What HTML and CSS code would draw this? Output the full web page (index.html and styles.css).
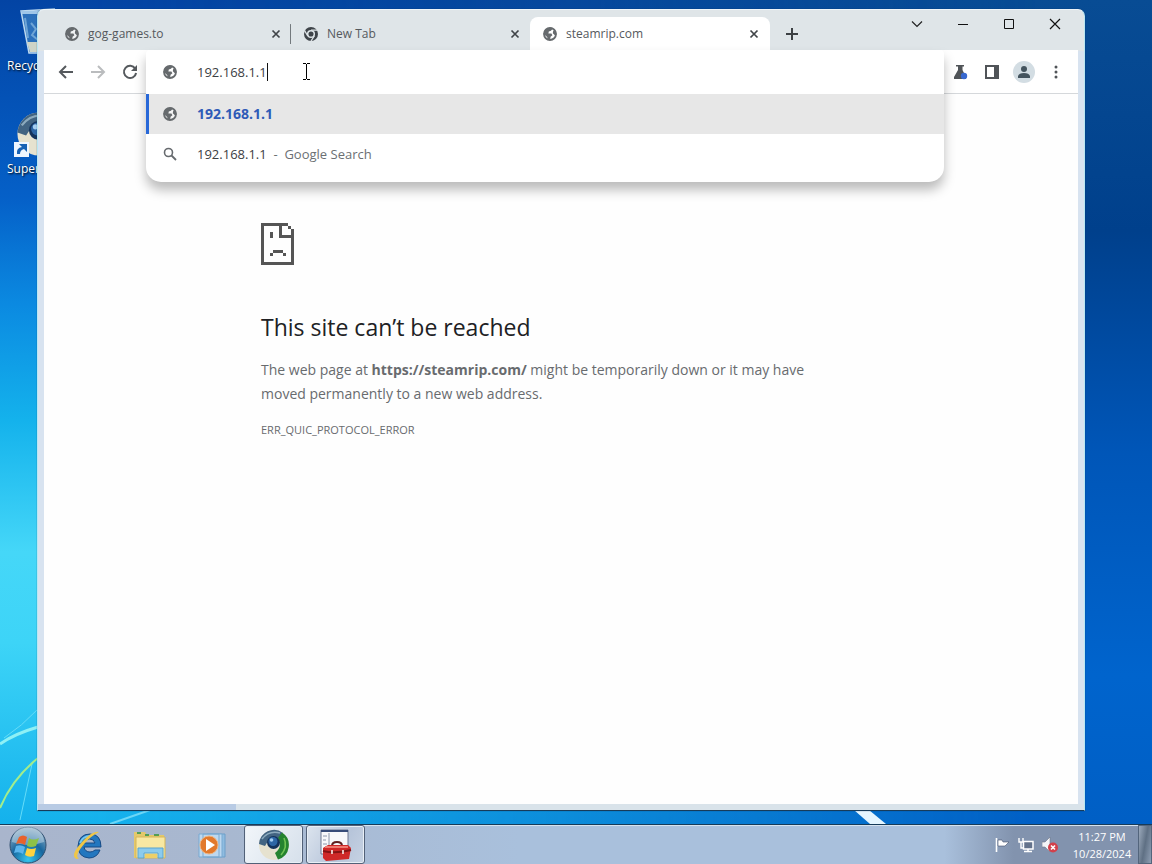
FILE: index.html
```html
<!DOCTYPE html>
<html lang="en">
<head>
<meta charset="utf-8">
<title>steamrip.com</title>
<link rel="stylesheet" href="styles.css">
</head>
<body>
<svg class="defs" aria-hidden="true">
  <defs>
    <symbol id="globe" viewBox="0 0 16 16">
      <circle cx="8" cy="8" r="6" fill="#fff" fill-opacity=".55" stroke="currentColor" stroke-width="1.8"/>
      <path fill="currentColor" d="M1.5 8 3 4 6 2 9.6 1.6 10.4 3 9 4.8 6.8 5.6 6.4 7.4 9.4 7.6 10.4 9.2 8.6 10.8 8 14.2 5.6 13.6 5.2 11ZM11.2 4.8 14 5.4 14.5 8.6 12.8 9.2 10.8 7.2Z"/>
    </symbol>
    <symbol id="close" viewBox="0 0 10 10"><path d="M1.5 1.5l7 7M8.5 1.5l-7 7" stroke="currentColor" stroke-width="1.7"/></symbol>
    <symbol id="ball" viewBox="0 0 32 32">
      <circle cx="16" cy="16" r="15" fill="#e6e2cf"/>
      <path d="M1 15A15 15 0 0 1 25 4L20 10Q10 10 7 17Z" fill="#426482"/>
      <path d="M24 3.500A15 15 0 0 1 20 30.500L17 24Q25 18 20 9Z" fill="#24832f"/>
      <path d="M26 9Q30 18 23 26" fill="none" stroke="#6fc354" stroke-width="1.6"/>
      <path d="M4 10Q11 1 22 4" fill="none" stroke="#8caabd" stroke-width="1.6"/>
      <circle cx="15.500" cy="13.500" r="6.500" fill="#14335c"/><circle cx="15" cy="12.500" r="4.500" fill="#2d66a5"/><circle cx="13.500" cy="11" r="1.800" fill="#a4cdf0"/>
    </symbol>
  </defs>
</svg>
<main class="desktop">
  <svg class="streaks left" viewBox="0 0 240 190" aria-hidden="true">
    <path d="M0 110Q14 100 38 93" stroke="#8ef0f5" stroke-width="3" fill="none"/>
    <path d="M4 104Q22 92 38 75M20 186 32 130" stroke="#65dcf8" fill="none"/>
    <path d="M0 174Q12 145 38 124" stroke="#a2ed8c" stroke-width="2" fill="none"/>
    <path d="M110 190 150 176" stroke="#6cd6f6" stroke-width="2"/>
  </svg>
  <svg class="streaks middle" viewBox="0 0 36 14" aria-hidden="true"><path d="M2 0H17L34 14H18Z" fill="#e5f6ff"/></svg>

  <ul class="shortcuts">
    <li>
      <svg width="36" height="48" viewBox="0 0 36 48" aria-hidden="true"><path d="M2 3 36 1 31 45H10Z" fill="#3b7fc2" fill-opacity=".75" stroke="#bbd8ef" stroke-width="1.500"/><path d="M2 3H36V6H3Z" fill="#9fc6e8"/><path d="M8 34H33L31 44H11Z" fill="#ced4c7"/><path d="M6 10 9 30M12 15l5 6-4 6 6 5" stroke="#6fa5d6" stroke-width="2" fill="none"/></svg>
      <span>Recycle Bin</span>
    </li>
    <li>
      <svg width="48" height="48" viewBox="0 0 48 48" aria-hidden="true"><use href="#ball" x="2" y="0" width="46" height="46"/><path d="M0 31H15V46H0Z" fill="#eef6ff"/><path d="M3 43Q2 37 8 36L5 33H13V41L10 38Q6 39 6 43Z" fill="#1762b5"/></svg>
      <span>Supermium</span>
    </li>
  </ul>

  <section class="window" aria-label="Browser">
    <header class="titlebar">
      <div class="tabs" role="tablist">
        <div class="tab" role="tab"><svg class="icon"><use href="#globe"/></svg><span>gog-games.to</span><button aria-label="Close gog-games.to"><svg><use href="#close"/></svg></button></div>
        <div class="tab" role="tab">
          <svg class="icon" viewBox="0 0 16 16"><circle cx="8" cy="8" r="7" fill="#3f4449"/><circle cx="8" cy="8" r="3.3" fill="#3f4449" stroke="#dfe5e8" stroke-width="1.5"/><path d="M8 4.2H14.5M4.8 10 1.6 4.6M11.3 10 8 15" stroke="#dfe5e8" stroke-width="1.3"/></svg>
          <span>New Tab</span><button aria-label="Close New Tab"><svg><use href="#close"/></svg></button></div>
        <div class="tab active" role="tab" aria-selected="true"><svg class="icon"><use href="#globe"/></svg><span>steamrip.com</span><button aria-label="Close steamrip.com"><svg><use href="#close"/></svg></button></div>
        <button class="new-tab" aria-label="New tab"><svg width="12" height="12" viewBox="0 0 12 12"><path d="M6 0V12M0 6H12" stroke="#3c4043" stroke-width="2"/></svg></button>
      </div>
      <div class="controls">
        <button aria-label="Search tabs"><svg viewBox="0 0 12 12"><path d="M1 3.5 6 8.5 11 3.5" fill="none" stroke="#222" stroke-width="1.2"/></svg></button>
        <button aria-label="Minimize"><svg viewBox="0 0 12 12"><path d="M1 6.5H11" stroke="#111"/></svg></button>
        <button aria-label="Maximize"><svg viewBox="0 0 12 12"><path d="M1.5 1.5H10.5V10.5H1.5Z" fill="none" stroke="#111"/></svg></button>
        <button aria-label="Close"><svg viewBox="0 0 12 12"><path d="M1 1 11 11M11 1 1 11" stroke="#111" stroke-width="1.2"/></svg></button>
      </div>
    </header>

    <div class="toolbar">
      <button aria-label="Back"><svg viewBox="0 0 16 16"><path d="M15 8H2.5M8 2 2 8 8 14" fill="none" stroke="#55595d" stroke-width="2"/></svg></button>
      <button aria-label="Forward"><svg viewBox="0 0 16 16"><path d="M1 8H13.5M8 2 14 8 8 14" fill="none" stroke="#babcbe" stroke-width="2"/></svg></button>
      <button aria-label="Reload"><svg viewBox="0 0 16 16"><path d="M13.2 4.6A6.1 6.1 0 1 0 14.1 9" fill="none" stroke="#55595d" stroke-width="2"/><path d="M15 1V7H9Z" fill="#55595d"/></svg></button>
      <div class="omnibox">
        <div class="popup">
          <label class="address"><svg class="icon"><use href="#globe"/></svg><input type="text" value="192.168.1.1" aria-label="Address" spellcheck="false"><i class="caret"></i></label>
          <ul class="suggestions">
            <li class="selected"><svg class="icon"><use href="#globe"/></svg><b>192.168.1.1</b></li>
            <li><svg class="icon" viewBox="0 0 16 16"><circle cx="6.5" cy="6.5" r="4" fill="none" stroke="#666a6e" stroke-width="1.6"/><path d="M9.5 9.5 14 14" stroke="#666a6e" stroke-width="1.8"/></svg><span>192.168.1.1&nbsp; <em>- &nbsp;Google Search</em></span></li>
          </ul>
        </div>
      </div>
      <button aria-label="Experiments"><svg viewBox="0 0 16 16"><path d="M4 1H12V2.5H10.5V6L14 13V15H2V13L6 6V2.5H4Z" fill="#505458"/><circle cx="12" cy="12" r="3.2" fill="#3868cf"/></svg></button>
      <button aria-label="Side panel"><svg viewBox="0 0 16 16"><path d="M1 1H15V15H1Z" fill="#505458"/><path d="M3 3H10V13H3Z" fill="#fff"/></svg></button>
      <button class="profile" aria-label="Profile"><svg viewBox="0 0 22 22"><circle cx="11" cy="11" r="11" fill="#d3dde3"/><circle cx="11" cy="8" r="3" fill="#44545e"/><path d="M5 17V15Q6 12 11 12T17 15V17Z" fill="#44545e"/></svg></button>
      <button aria-label="Menu"><svg viewBox="0 0 16 16" fill="#505458"><circle cx="8" cy="3" r="1.5"/><circle cx="8" cy="8" r="1.5"/><circle cx="8" cy="13" r="1.5"/></svg></button>
    </div>

    <article class="page">
      <div class="error">
        <svg class="sad" width="34" height="43" viewBox="0 0 34 43" fill="#555" shape-rendering="crispEdges" aria-hidden="true"><path d="M0 0H27V3H21V12H33V42H0ZM3 3V39H30V15H18V3ZM27 3H30V6H27ZM30 6H33V12H30ZM9 9H12V15H9ZM12 27H22V30H12ZM9 30H12V33H9ZM22 30H25V33H22Z" fill-rule="evenodd"/></svg>
        <h1>This site can’t be reached</h1>
        <p>The web page at <strong>https://steamrip.com/</strong> might be temporarily down or it may have moved permanently to a new web address.</p>
        <p class="code">ERR_QUIC_PROTOCOL_ERROR</p>
      </div>
    </article>
  </section>
  <svg class="pointer" viewBox="0 0 9 17" aria-hidden="true"><path d="M1 .5H4M5 .5H8M1 16.5H4M5 16.5H8M4.5 1V16" stroke="#000"/></svg>
</main>

<footer class="taskbar">
  <button class="start" aria-label="Start">
    <svg width="38" height="38" viewBox="0 0 38 38"><defs><radialGradient id="orb" cx=".5" cy=".9" r=".9"><stop offset="0" stop-color="#35c6ee"/><stop offset=".5" stop-color="#17669e"/><stop offset="1" stop-color="#9db6c9"/></radialGradient></defs><circle cx="19" cy="19" r="18" fill="url(#orb)" stroke="#304f70"/><path d="M3 16A16 16 0 0 1 35 16Q19 22 3 16" fill="#d5e4ef" fill-opacity=".45"/><path d="M10 11Q14 8 18 11L16 19Q12 16 7 18Z" fill="#e8622c"/><path d="M20 12Q24 15 30 12L27 20Q22 22 18 20Z" fill="#8cc248"/><path d="M7 20Q12 18 16 21L14 28Q10 25 5 27Z" fill="#5bb5ed"/><path d="M18 22Q22 24 27 22L25 30Q20 32 16 29Z" fill="#ffd33e"/></svg>
  </button>
  <button class="task" aria-label="Internet Explorer">
    <svg width="32" height="32" viewBox="0 0 32 32"><path d="M29 18H12Q13 23 18 23 21 23 23 21H28Q25 29 17 29 6 28 6 17 7 5 18 5 29 5 29 18ZM12 14H23Q22 10 17.5 10T12 14Z" fill="#2377bf" stroke="#164a85"/><path d="M8 14Q11 7 18 7" fill="none" stroke="#75c9f1" stroke-width="2"/><path d="M3 29Q-1 25 10 13T27 3Q19 7 13 14T6 24Q4 29 7 29 5 31 3 29Z" fill="#efc647"/></svg>
  </button>
  <button class="task" aria-label="Windows Explorer">
    <svg width="34" height="30" viewBox="0 0 34 30"><path d="M1 2H12L14 5H31V28H1Z" fill="#e4c86a"/><path d="M3 7H32V28H3Z" fill="#f8e8a2" stroke="#d6b65a"/><path d="M4 3h4M12 5h4M21 5h5" stroke="#549e54" stroke-width="2"/><path d="M5 28V18H30V28H25V23H11V28Z" fill="#8bcbed" stroke="#5ba4ce"/><path d="M12 24H24V28H12Z" fill="#eed068"/></svg>
  </button>
  <button class="task" aria-label="Windows Media Player">
    <svg width="30" height="28" viewBox="0 0 30 28"><path d="M10 3H28V26H10Z" fill="#8fbce0" stroke="#6d9fc9"/><path d="M6 3H25V26H6ZM2 3H22V26H2Z" fill="#bdd8ef" stroke="#79a9d1"/><circle cx="12" cy="14" r="9" fill="#e2792c" stroke="#f0b580"/><path d="M9 8 18 14 9 20Z" fill="#fff"/></svg>
  </button>
  <button class="task open current" aria-label="Supermium"><svg width="32" height="32"><use href="#ball"/></svg></button>
  <button class="task open" aria-label="Toolbox">
    <svg width="32" height="34" viewBox="0 0 32 34"><path d="M1 2H28V26H1Z" fill="#f7f8fb" stroke="#6d7790"/><path d="M1 2H28V4H1Z" fill="#374c79"/><path d="M3 8h4M3 12h3M3 16h4M9 5V20" stroke="#8c96aa"/><path d="M12 18Q12 14 17 14T22 18" fill="none" stroke="#602020" stroke-width="2"/><path d="M3 20 8 17H28L31 20 29 31 6 33 3 30Z" fill="#cf2828"/><path d="M3 23Q15 26 31 22" fill="none" stroke="#841414" stroke-width="2"/><path d="M5 19H28" stroke="#ef7970" stroke-width="2"/><path d="M12 22v4M23 22v4" stroke="#e6c2bf" stroke-width="2"/></svg>
  </button>
  <div class="tray">
    <svg viewBox="0 0 16 16" aria-label="Action Center"><path d="M2.5 1V15" stroke="#fff" stroke-width="1.6"/><path d="M4 3H8L9 5H15L13 7 11 9H8L7 9H4Z" fill="#fff" stroke="#46536b" stroke-width=".6"/></svg>
    <svg viewBox="0 0 16 16" aria-label="Network"><path d="M5.5 4.5H15V12H5.5ZM10 12V14M6 14.5H14" fill="#64738c" stroke="#fff" stroke-width="1.5"/><path d="M1 1V5H5V1M3 5V11H5" fill="none" stroke="#fff" stroke-width="1.4"/></svg>
    <svg viewBox="0 0 16 16" aria-label="Volume muted"><path d="M0 5H3L8 0V15L3 10H0Z" fill="#f4f5f8" stroke="#6e7687" stroke-width=".6"/><circle cx="11" cy="10.500" r="5" fill="#d2404b"/><path d="M9 8.500 13 12.500M13 8.500 9 12.500" stroke="#fff" stroke-width="1.6"/></svg>
  </div>
  <time class="clock"><span>11:27 PM</span><span>10/28/2024</span></time>
  <button class="show-desktop" aria-label="Show desktop"></button>
</footer>
</body>
</html>
```

FILE: styles.css
```css
* { box-sizing: border-box; }
body {
  margin: 0;
  min-height: 100vh;
  display: grid;
  grid-template-rows: 1fr 40px;
  font: 12px/16px "Open Sans", "Noto Sans", sans-serif;
  color: #5f6368;
  overflow: hidden;
}
button { border: 0; padding: 0; background: none; display: grid; place-items: center; color: inherit; font: inherit; }
ul { list-style: none; margin: 0; padding: 0; }
.defs { position: absolute; width: 0; height: 0; }

.desktop {
  position: relative;
  isolation: isolate;
  overflow: hidden;
  background: linear-gradient(#084c94, #00408c 28%, #0056b8 55%, #0064cd 82%, #005fc5);
}
.desktop::before {
  content: "";
  position: absolute;
  inset: 0;
  z-index: -1;
  background: linear-gradient(#0344a4, #0560c8 24%, #0b8ae1 37%, #14b2ec 51%, #45d7f8 67%, #3dd4f7 78%, #14b1ec);
  mask-image: linear-gradient(90deg, #000 8%, #0008 50%, transparent 90%);
}
.streaks { position: absolute; bottom: 0; z-index: -1; }
.left { left: 0; width: 240px; }
.middle { left: 74%; width: 36px; }

.shortcuts { position: absolute; top: 8px; left: 0; display: grid; gap: 37px; width: 76px; }
.shortcuts li { display: grid; justify-items: start; padding-left: 7px; gap: 2px; color: #fff; text-shadow: 1px 1px 2px #000; white-space: nowrap; }
.shortcuts svg { margin-left: 7px; }
.shortcuts li:first-child svg { margin-left: 12px; }

.window {
  position: absolute;
  inset: 9px 67px 13px 37px;
  display: flex;
  flex-direction: column;
  padding: 0 6px 6px;
  border: 1px solid #b9e7f3;
  border-top-color: #eef4f8;
  border-bottom-color: #173b59;
  border-radius: 7px 7px 0 0;
  background: linear-gradient(90deg, #b8cbe4 198px, #d9e3ea 198px) bottom / 100% 6px no-repeat, linear-gradient(#dfe5e8 0 41px, #d8e3f0 41px);
  box-shadow: 0 0 1px #08294f;
}

.titlebar { display: flex; justify-content: space-between; height: 40px; padding-left: 8px; }
.tabs { display: flex; flex: 1; padding-top: 7px; min-width: 0; }
.tab { display: flex; align-items: center; flex: 0 1 239px; gap: 8px; padding: 0 9px 0 12px; color: #55595d; border-radius: 8px 8px 0 0; }
.tab span { flex: 1; }
.tab button { width: 12px; height: 12px; color: #404448; }
.tab button svg { width: 10px; height: 10px; }
.tab:first-child { background: linear-gradient(#73797d, #73797d) right / 1px 20px no-repeat; }
.tab.active { flex-basis: 240px; padding-right: 10px; background: #fff; }
.icon { width: 16px; height: 16px; flex: none; color: #666a6d; }
.new-tab { width: 44px; }
.controls { display: flex; height: 28px; }
.controls button { width: 46px; }
.controls svg { width: 12px; height: 12px; }

.toolbar { display: flex; align-items: center; height: 44px; padding: 0 6px; background: #fff; border-bottom: 1px solid #d5d8db; }
.toolbar > button { width: 32px; height: 32px; }
.toolbar > button svg { width: 16px; height: 16px; }
.toolbar > .profile svg { width: 22px; height: 22px; }
.omnibox { flex: 1; align-self: stretch; position: relative; font-size: 13px; color: #3c4043; }
.popup { position: absolute; inset: 0 0 auto; z-index: 1; background: #fff; border-radius: 4px 4px 15px 15px; box-shadow: 0 8px 12px #0004; padding-bottom: 8px; overflow: hidden; }
.address { display: flex; align-items: center; height: 44px; padding: 0 16px; }
.address .icon { margin-right: 19px; }
.address input { width: 70px; border: 0; padding: 0; outline: 0; font: inherit; color: inherit; background: none; }
.caret { width: 1px; height: 18px; background: #111; }
.suggestions li { display: flex; align-items: center; gap: 19px; height: 40px; padding: 0 16px; }
.suggestions .selected { background: #e7e7e7; box-shadow: inset 3px 0 #2868d8; color: #2f5bb7; font-size: 14px; }
.suggestions em { font-style: normal; color: #6b6f73; }
.pointer { position: absolute; left: 302px; top: 63px; z-index: 2; width: 9px; height: 17px; }

.page { flex: 1; background: #fefefe; padding: 129px 217px 0; }
.error { max-width: 570px; font-size: 14px; line-height: 24px; color: #686b6e; }
.sad { display: block; }
.error h1 { margin: 45px 0 15px; font-size: 23px; line-height: 32px; font-weight: 500; color: #202124; }
.error p { margin: 0; }
.error .code { margin-top: 12px; font-size: 11px; }

.taskbar {
  display: flex;
  gap: 3px;
  border-top: 1px solid #173b59;
  box-shadow: inset 0 1px #d6e3ef;
  background: linear-gradient(90deg, #a9b5cc, #a8b8d0 20%, #a9c0dc 45%, #a9c0dc 82%, #8293ae 88%);
}
.start { width: 55px; }
.task { width: 59px; border: 1px solid transparent; }
.open { border-color: #526178; border-radius: 3px; background: linear-gradient(120deg, #dce4ee, #b7c5da 60%, #c7d3e3); box-shadow: inset 0 0 0 1px #e8eff6; }
.current { background: linear-gradient(120deg, #f2f6fa, #d6e0eb); }
.tray { display: flex; align-items: center; gap: 8px; margin-left: auto; padding-right: 8px; }
.tray svg { width: 16px; height: 16px; }
.clock { display: grid; align-content: center; justify-items: center; line-height: 17px; color: #fff; width: 66px; font-size: 11px; }
.show-desktop { width: 14px; border: 1px solid #53657c; background: linear-gradient(100deg, #9caabc, #5f7084 50%, #8f9fb4); }
```
